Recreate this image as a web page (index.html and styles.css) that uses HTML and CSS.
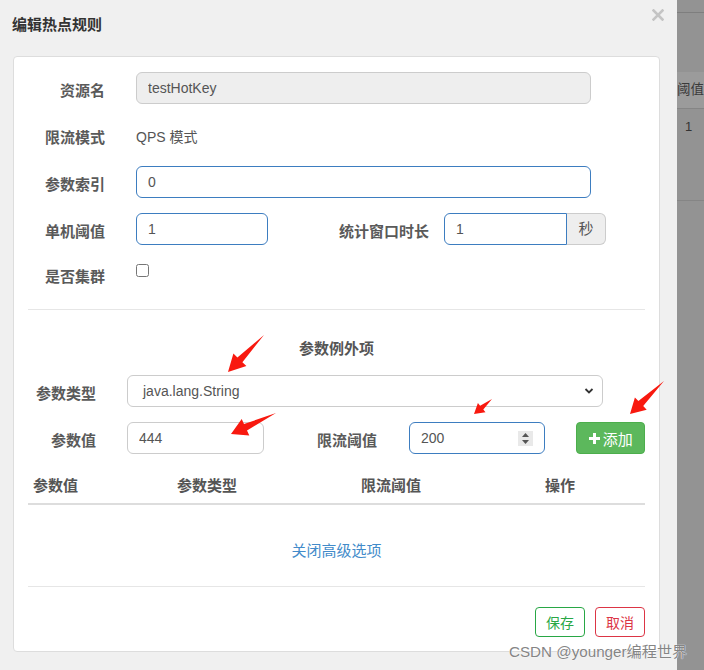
FILE: index.html
```html
<!DOCTYPE html>
<html lang="zh-CN">
<head>
    <meta charset="UTF-8">
    <title>编辑热点规则</title>
    <link rel="stylesheet" href="styles.css">
</head>
<body>
    <div class="dialog">
        <div class="dialog-header">
            <h4 class="dialog-title">编辑热点规则</h4>
            <span class="close-btn">
                <svg width="12" height="12" viewBox="0 0 12 12"><path d="M1.5 1.5 L10.5 10.5 M10.5 1.5 L1.5 10.5" stroke="#c4c4c4" stroke-width="2.6" stroke-linecap="square"/></svg>
            </span>
        </div>

        <div class="card">
            <!-- basic rule -->
            <div class="form-section">
                <div class="form-row">
                    <label class="form-label">资源名</label>
                    <input class="form-control wide readonly" type="text" value="testHotKey" readonly>
                </div>
                <div class="form-row">
                    <label class="form-label">限流模式</label>
                    <p class="static-text">QPS 模式</p>
                </div>
                <div class="form-row">
                    <label class="form-label">参数索引</label>
                    <input class="form-control wide active" type="text" value="0">
                </div>
                <div class="form-row">
                    <label class="form-label">单机阈值</label>
                    <input class="form-control short active" type="text" value="1">
                    <label class="form-label inline-label">统计窗口时长</label>
                    <div class="input-group">
                        <input class="form-control active" type="text" value="1">
                        <span class="addon">秒</span>
                    </div>
                </div>
                <div class="form-row last">
                    <label class="form-label check-label">是否集群</label>
                    <input class="check" type="checkbox">
                </div>
            </div>

            <hr class="divider">

            <!-- advanced options -->
            <h5 class="section-title">参数例外项</h5>
            <div class="form-section advanced">
                <div class="form-row">
                    <label class="form-label">参数类型</label>
                    <div class="form-control select">
                        <span>java.lang.String</span>
                        <svg width="10" height="8" viewBox="0 0 10 8"><path d="M1.5 2 L5 5.5 L8.5 2" fill="none" stroke="#333" stroke-width="1.8"/></svg>
                    </div>
                </div>
                <div class="form-row">
                    <label class="form-label">参数值</label>
                    <input class="form-control item" type="text" value="444">
                    <label class="form-label limit-label">限流阈值</label>
                    <div class="form-control item number active">
                        <span>200</span>
                        <span class="spinner">
                            <svg width="9" height="13" viewBox="0 0 9 13"><path d="M4.5 1 L8 5 L1 5 Z M4.5 12 L8 8 L1 8 Z" fill="#555"/></svg>
                        </span>
                    </div>
                    <button class="btn-add">
                        <svg width="11" height="11" viewBox="0 0 11 11"><path d="M4 0 H7 V4 H11 V7 H7 V11 H4 V7 H0 V4 H4 Z" fill="#fff"/></svg>
                        添加
                    </button>
                </div>
            </div>

            <table class="item-table">
                <thead>
                    <tr>
                        <th class="col-value">参数值</th>
                        <th class="col-type">参数类型</th>
                        <th class="col-limit">限流阈值</th>
                        <th>操作</th>
                    </tr>
                </thead>
                <tbody></tbody>
            </table>

            <p class="toggle-text"><a class="toggle-link">关闭高级选项</a></p>

            <hr class="divider bottom">

            <div class="footer">
                <button class="btn-outline save">保存</button>
                <button class="btn-outline cancel">取消</button>
            </div>
        </div>
    </div>

    <!-- page behind the modal -->
    <div class="backdrop">
        <div class="bd-top"></div>
        <div class="bd-head">阈值</div>
        <div class="bd-row">1</div>
    </div>

    <div class="watermark">CSDN @younger编程世界</div>

    <svg class="arrows" width="704" height="670" viewBox="0 0 704 670">
        <polygon points="264,335 237.4,357.4 233.4,353.5 228,372 246.4,366.1 242.4,362.2"/>
        <polygon points="276,413 244,424 241.7,419 231,434 249.3,435.4 247,430.4"/>
        <polygon points="492,399 480.1,405.7 477.9,403 474,414 485.5,412.2 483.3,409.5"/>
        <polygon points="664,381 638.4,401.1 634.9,397.5 630,414 646.7,409.7 643.2,406.1"/>
    </svg>
</body>
</html>
```

FILE: styles.css
```css
* {
    margin: 0;
    padding: 0;
    box-sizing: border-box;
}

body {
    width: 704px;
    height: 670px;
    display: flex;
    overflow: hidden;
    font-family: "Liberation Sans", "Noto Sans CJK SC", sans-serif;
    font-size: 14px;
    color: #555;
}

.dialog {
    width: 677px;
    height: 670px;
    background: #f0f0f0;
}

.dialog-header {
    height: 56px;
    display: flex;
    justify-content: space-between;
    padding: 0 12px 0 12px;
}

.dialog-title {
    padding-top: 15px;
    line-height: 20px;
    font-size: 15px;
    font-weight: bold;
    color: #333;
}

.close-btn {
    padding-top: 8px;
    margin-right: 1px;
}

.card {
    width: 647px;
    margin-left: 13px;
    background: white;
    border: 1px solid #ddd;
    border-radius: 4px;
    padding: 15px 14px 14px;
}

.form-row {
    display: flex;
    align-items: flex-start;
    min-height: 32px;
    margin-bottom: 15px;
}

.form-row.last {
    margin-bottom: 0;
}

.form-label {
    width: 77px;
    flex-shrink: 0;
    margin-right: 31px;
    padding-top: 9px;
    line-height: 20px;
    text-align: right;
    font-size: 15px;
    font-weight: bold;
    color: #5a5a5a;
}

.check-label {
    padding-top: 7px;
}

.static-text {
    padding-top: 8px;
    line-height: 20px;
    color: #555;
}

.form-control {
    height: 32px;
    padding: 0 11px;
    border: 1px solid #ccc;
    border-radius: 6px;
    font-family: inherit;
    font-size: 14px;
    color: #555;
    background: white;
    outline: none;
}

.form-control.wide {
    width: 455px;
}

.form-control.short {
    width: 132px;
}

.form-control.readonly {
    background: #eee;
}

.form-control.active {
    border-color: #3d7dc0;
}

.inline-label {
    width: 161px;
    margin-right: 15px;
}

.input-group {
    display: flex;
}

.input-group .form-control {
    width: 123px;
    border-radius: 6px 0 0 6px;
}

.addon {
    width: 39px;
    height: 32px;
    line-height: 30px;
    text-align: center;
    font-size: 15px;
    color: #555;
    background: #eee;
    border: 1px solid #ccc;
    border-left: none;
    border-radius: 0 6px 6px 0;
}

.check {
    width: 13px;
    height: 13px;
    margin-top: 4px;
}

.divider {
    border: none;
    border-top: 1px solid #e6e6e6;
    margin: 17px 0 29px;
}

.section-title {
    text-align: center;
    line-height: 20px;
    font-size: 15px;
    font-weight: bold;
    color: #555;
    margin-bottom: 16px;
}

.advanced .form-label {
    width: 68px;
}

.advanced .limit-label {
    width: 113px;
    margin-right: 32px;
}

.form-control.select {
    width: 476px;
    display: flex;
    align-items: center;
    justify-content: space-between;
    padding: 0 8px 0 15px;
    border-radius: 6px;
}

.form-control.item {
    width: 137px;
    line-height: 30px;
}

.form-control.number {
    display: flex;
    align-items: center;
    justify-content: space-between;
    padding-right: 11px;
}

.spinner {
    width: 15px;
    height: 15px;
    display: flex;
    align-items: center;
    justify-content: center;
    background: #e9e9e9;
}

.btn-add {
    width: 69px;
    height: 32px;
    margin-left: 31px;
    display: flex;
    align-items: center;
    justify-content: center;
    gap: 3px;
    background: #5cb85c;
    border: 1px solid #4cae4c;
    border-radius: 4px;
    color: white;
    font-family: inherit;
    font-size: 15px;
}

.item-table {
    width: 617px;
    margin-top: 12px;
    border-collapse: collapse;
}

.item-table th {
    text-align: left;
    padding: 7px 5px;
    line-height: 20px;
    font-size: 15px;
    font-weight: bold;
    color: #555;
    border-bottom: 2px solid #ddd;
}

.col-value {
    width: 144px;
}

.col-type,
.col-limit {
    width: 184px;
}

.toggle-text {
    margin-top: 36px;
    text-align: center;
    line-height: 20px;
}

.toggle-link {
    color: #428bca;
    font-size: 15px;
    cursor: pointer;
}

.divider.bottom {
    margin: 25px 0 0;
}

.footer {
    margin-top: 20px;
    display: flex;
    justify-content: flex-end;
    gap: 10px;
}

.btn-outline {
    width: 50px;
    height: 30px;
    background: white;
    border-radius: 4px;
    font-family: inherit;
    font-size: 14px;
}

.btn-outline.save {
    color: #28a745;
    border: 1px solid #28a745;
}

.btn-outline.cancel {
    color: #dc3545;
    border: 1px solid #dc3545;
}

.backdrop {
    flex: 1;
    background: #939393;
    overflow: hidden;
    white-space: nowrap;
}

.bd-top {
    height: 13px;
    border-bottom: 1px solid #7e7e7e;
}

.bd-head {
    margin-top: 59px;
    height: 37px;
    line-height: 35px;
    background: #9b9b9b;
    border-bottom: 1px solid #858585;
    font-size: 13.5px;
    color: #3a3a3a;
}

.bd-row {
    height: 92px;
    padding: 8px 0 0 8px;
    line-height: 20px;
    font-size: 13px;
    color: #333;
    border-bottom: 1px solid #858585;
}

.watermark {
    position: absolute;
    left: 509px;
    top: 641px;
    font-size: 15.2px;
    line-height: 22px;
    color: #858585;
    text-shadow: 0 0 1px #fff, 0 0 1px #fff;
    white-space: nowrap;
}

.arrows {
    position: absolute;
    left: 0;
    top: 0;
    pointer-events: none;
}

.arrows polygon {
    fill: #f8190f;
}
```
